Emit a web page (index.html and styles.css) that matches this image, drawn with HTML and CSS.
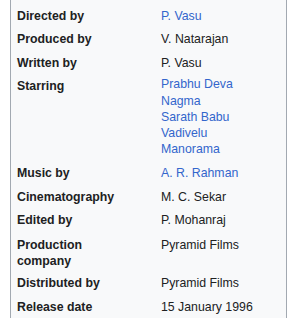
FILE: index.html
```html
<!DOCTYPE html>
<html>
<head>
<meta charset="utf-8">
<link rel="stylesheet" href="styles.css">
</head>
<body>
<div class="infobox">
  <div class="row"><div class="label">Directed by</div><div class="value"><a>P. Vasu</a></div></div>
  <div class="row"><div class="label">Produced by</div><div class="value">V. Natarajan</div></div>
  <div class="row"><div class="label">Written by</div><div class="value">P. Vasu</div></div>
  <div class="row"><div class="label">Starring</div><div class="value">
    <ul class="plainlist">
      <li><a>Prabhu Deva</a></li>
      <li><a>Nagma</a></li>
      <li><a>Sarath Babu</a></li>
      <li><a>Vadivelu</a></li>
      <li><a>Manorama</a></li>
    </ul>
  </div></div>
  <div class="row"><div class="label">Music by</div><div class="value"><a>A. R. Rahman</a></div></div>
  <div class="row"><div class="label">Cinematography</div><div class="value">M. C. Sekar</div></div>
  <div class="row"><div class="label">Edited by</div><div class="value">P. Mohanraj</div></div>
  <div class="row row-tight"><div class="label">Production<br>company</div><div class="value">Pyramid Films</div></div>
  <div class="row"><div class="label">Distributed by</div><div class="value">Pyramid Films</div></div>
  <div class="row"><div class="label">Release date</div><div class="value">15 January 1996</div></div>
</div>
</body>
</html>
```
FILE: styles.css
```css
html, body {
  margin: 0;
  padding: 0;
  background: #ffffff;
}
.infobox {
  margin-left: 10px;
  width: 277px;
  box-sizing: border-box;
  min-height: 318px;
  border-left: 1px solid #a2a9b1;
  border-right: 1px solid #a2a9b1;
  background: #f8f9fa;
  padding: 7.5px 0 0 6px;
  display: flex;
  flex-direction: column;
  gap: 7.6px;
  font-family: "Liberation Sans", Arial, sans-serif;
  font-size: 12.32px;
  line-height: 16px;
  color: #202122;
}
.row {
  display: grid;
  grid-template-columns: 144px 1fr;
}
.row-tight {
  margin-top: 1.5px;
  margin-bottom: -2px;
}
.label {
  font-weight: bold;
}
.value a {
  color: #3366cc;
}
.plainlist {
  list-style: none;
  margin: -2px 0 0 0;
  padding: 0;
  line-height: 16.25px;
}
```
